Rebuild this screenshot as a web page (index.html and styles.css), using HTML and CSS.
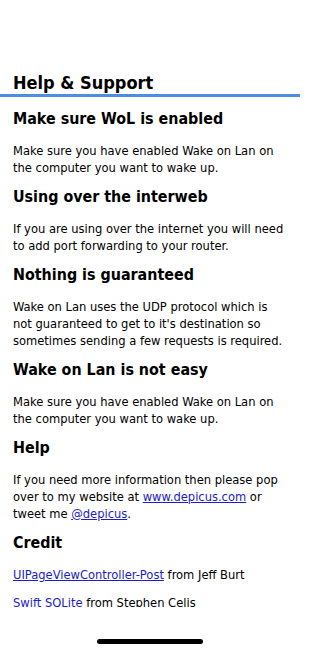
FILE: index.html
```html
<!DOCTYPE html>
<html>
<head>
<meta charset="utf-8">
<link rel="stylesheet" href="styles.css">
</head>
<body>
<div class="screen">
  <div class="scroll">
    <header class="header"><h1 class="title">Help &amp; Support</h1></header>
    <main class="content">
      <h2 class="heading">Make sure WoL is enabled</h2>
      <p class="text">Make sure you have enabled Wake on Lan on the computer you want to wake up.</p>
      <h2 class="heading">Using over the interweb</h2>
      <p class="text">If you are using over the internet you will need to add port forwarding to your router.</p>
      <h2 class="heading">Nothing is guaranteed</h2>
      <p class="text">Wake on Lan uses the UDP protocol which is not guaranteed to get to it's destination so sometimes sending a few requests is required.</p>
      <h2 class="heading">Wake on Lan is not easy</h2>
      <p class="text">Make sure you have enabled Wake on Lan on the computer you want to wake up.</p>
      <h2 class="heading">Help</h2>
      <p class="text">If you need more information then please pop over to my website at <a class="link" href="#">www.depicus.com</a> or tweet me <a class="link" href="#">@depicus</a>.</p>
      <h2 class="heading">Credit</h2>
      <p class="text"><a class="link" href="#">UIPageViewController-Post</a> from Jeff Burt</p>
      <p class="text"><a class="link plain" href="#">Swift SQLite</a> from Stephen Celis</p>
    </main>
  </div>
  <div class="home"><div class="home-bar"></div></div>
</div>
</body>
</html>
```
FILE: styles.css
```css
html, body {
  margin: 0;
  padding: 0;
  background: #ffffff;
}
body {
  font-family: "DejaVu Sans Condensed", "DejaVu Sans", sans-serif;
  color: #000000;
}
.screen {
  width: 300px;
  height: 650px;
  overflow: hidden;
  display: flex;
  flex-direction: column;
}
.scroll {
  height: 607px;
  overflow: hidden;
  flex: none;
}
.header {
  padding: 72px 13px 0;
  border-bottom: 3px solid #4a8fe0;
}
.title {
  margin: 0;
  font-size: 18px;
  line-height: 22px;
  font-weight: bold;
}
.content {
  padding: 12px 13px 0;
}
.heading {
  margin: 0 0 14px;
  font-size: 15.9px;
  line-height: 19px;
  font-weight: bold;
}
.text {
  margin: 0 0 11px;
  font-size: 12.8px;
  line-height: 17px;
}
.link {
  color: #1c1cc8;
  text-decoration: underline;
}
.link.plain {
  text-decoration: none;
}
.home {
  flex: 1;
  display: flex;
  justify-content: center;
  padding-top: 32px;
}
.home-bar {
  width: 106px;
  height: 5px;
  border-radius: 3px;
  background: #000000;
}
```
